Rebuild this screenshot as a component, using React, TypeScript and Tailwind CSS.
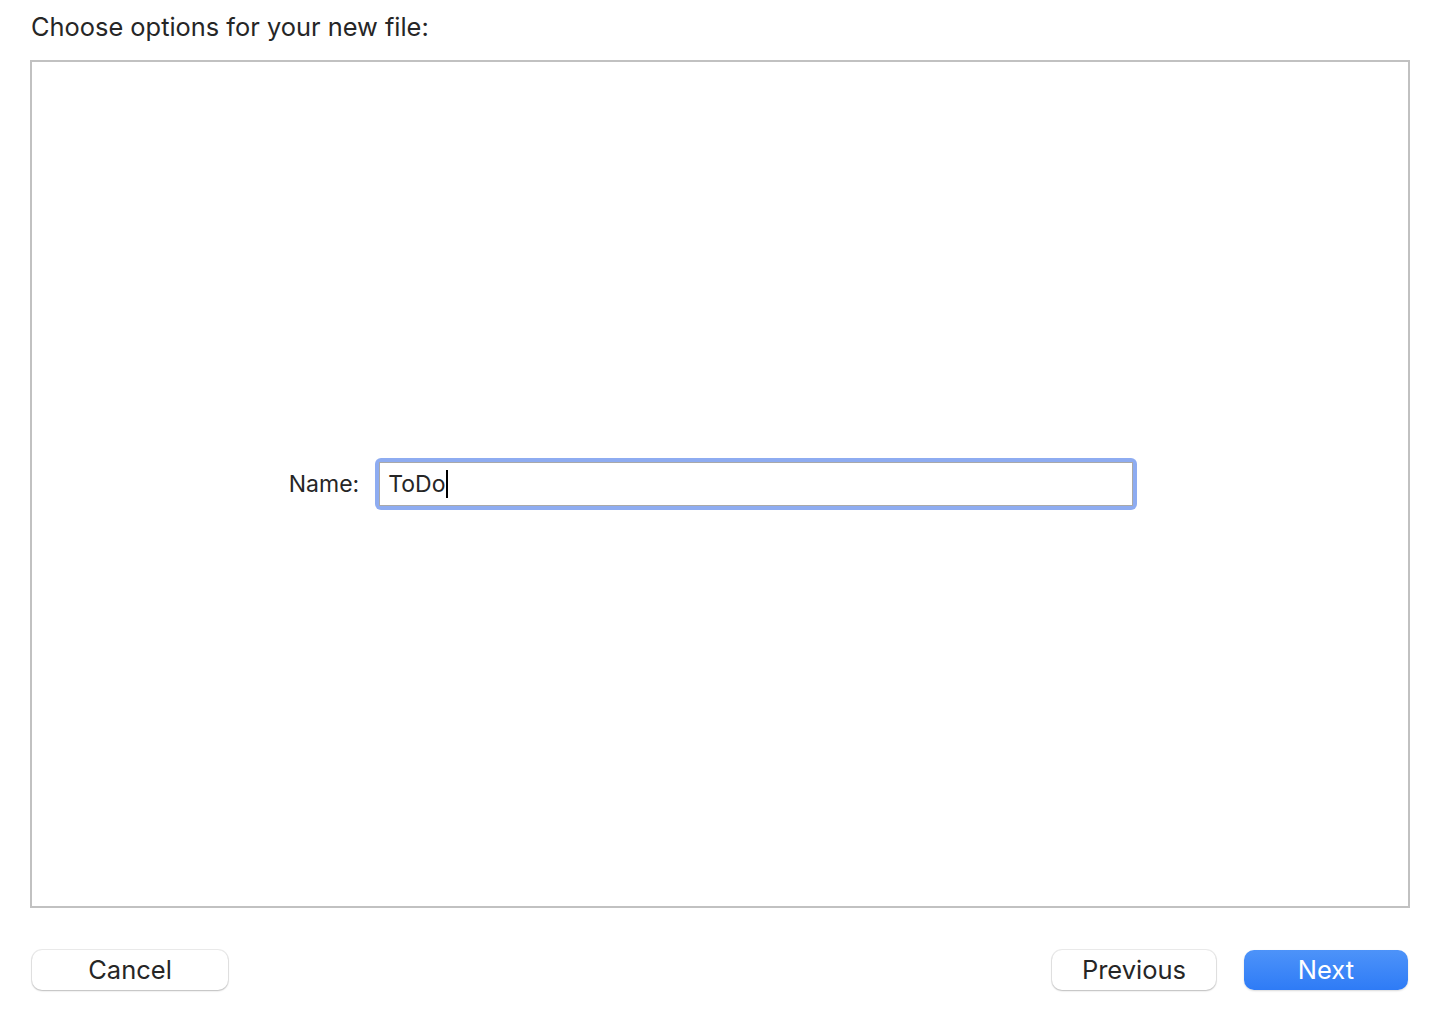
export default function App() {
  return (
    <div
      className="w-[1448px] h-[1028px] bg-white text-[#262626] flex flex-col"
      style={{ fontFamily: "Inter, 'Liberation Sans', sans-serif" }}
    >
      <div className="pl-[31px] pt-[10px] h-[60px] text-[25.4px] leading-[34px]">Choose options for your new file:</div>

      <div className="ml-[30px] mr-[38px] h-[848px] border-2 border-[#c1c1c1] bg-white flex items-center justify-center">
        <div className="flex items-center gap-[16px] -ml-[14px]">
          <span className="text-[23px]">Name:</span>
          <div className="w-[762px] h-[52px] rounded-[6px] bg-[#8eacf1] p-[4px]">
            <div className="h-full bg-white border border-[#a9a9a9] flex items-center pl-[8px] text-[23px]">
              <span>ToDo</span>
              <span className="w-[2px] h-[28px] bg-black ml-[1px]"></span>
            </div>
          </div>
        </div>
      </div>

      <div className="flex items-center pl-[32px] pr-[40px] pt-[42px]">
        <button className="w-[196px] h-[40px] rounded-[10px] bg-white text-[25.5px] shadow-[0_0_0_1px_rgba(0,0,0,0.08),0_1px_2px_rgba(0,0,0,0.2)]">
          Cancel
        </button>
        <div className="ml-auto flex gap-[28px]">
          <button className="w-[164px] h-[40px] rounded-[10px] bg-white text-[25.5px] shadow-[0_0_0_1px_rgba(0,0,0,0.08),0_1px_2px_rgba(0,0,0,0.2)]">
            Previous
          </button>
          <button className="w-[164px] h-[40px] rounded-[10px] bg-gradient-to-b from-[#4d93f9] to-[#2e7bf6] text-white text-[25.5px] shadow-[0_1px_2px_rgba(0,0,0,0.15)]">
            Next
          </button>
        </div>
      </div>
    </div>
  );
}
